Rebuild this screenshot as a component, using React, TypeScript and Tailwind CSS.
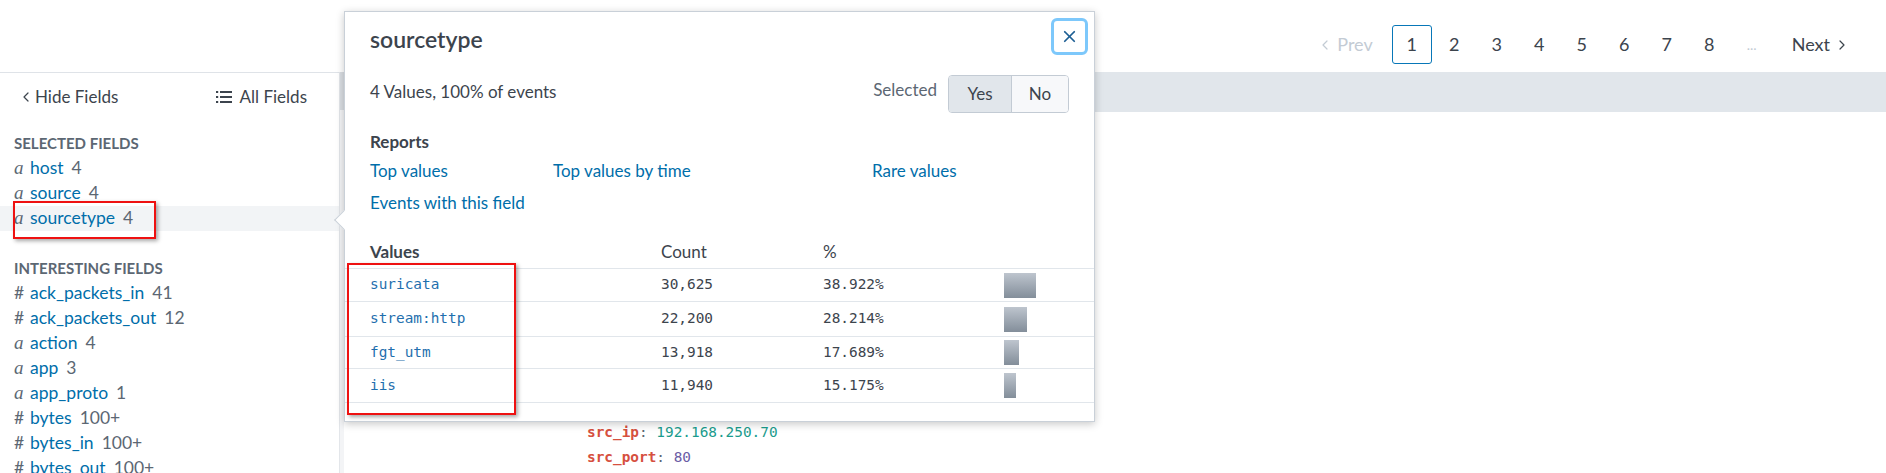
import React from 'react';
import { X, ChevronLeft, ChevronRight } from 'lucide-react';

type Field = { type: string; name: string; count: string; active?: boolean };

const SELECTED_FIELDS: Field[] = [
  { type: 'a', name: 'host', count: '4' },
  { type: 'a', name: 'source', count: '4' },
  { type: 'a', name: 'sourcetype', count: '4', active: true },
];

const INTERESTING_FIELDS: Field[] = [
  { type: '#', name: 'ack_packets_in', count: '41' },
  { type: '#', name: 'ack_packets_out', count: '12' },
  { type: 'a', name: 'action', count: '4' },
  { type: 'a', name: 'app', count: '3' },
  { type: 'a', name: 'app_proto', count: '1' },
  { type: '#', name: 'bytes', count: '100+' },
  { type: '#', name: 'bytes_in', count: '100+' },
  { type: '#', name: 'bytes_out', count: '100+' },
];

const VALUES = [
  { value: 'suricata', count: '30,625', pct: '38.922%', bar: 32, rowH: 'h-[33px]' },
  { value: 'stream:http', count: '22,200', pct: '28.214%', bar: 23, rowH: 'h-[35px]' },
  { value: 'fgt_utm', count: '13,918', pct: '17.689%', bar: 15, rowH: 'h-[32px]' },
  { value: 'iis', count: '11,940', pct: '15.175%', bar: 12, rowH: 'h-[34px]' },
];

const PAGES = ['1', '2', '3', '4', '5', '6', '7', '8', '...'];

const mono = "font-[family-name:'DejaVu_Sans_Mono',monospace]";

const FieldRow = ({ field }: { field: Field }) => (
  <div className={`flex items-center h-[25px] pl-[14px] text-[17.5px] ${field.active ? 'bg-[#f2f4f6]' : ''}`}>
    {field.type === 'a' ? (
      <span className="w-[16px] italic font-[family-name:'Liberation_Serif',serif] text-[19px] text-[#5c6773]">a</span>
    ) : (
      <span className="w-[16px] text-[#5c6773]">#</span>
    )}
    <span className="text-[#006eaa]">{field.name}</span>
    <span className="ml-[8px] text-[#5c6773]">{field.count}</span>
  </div>
);

const Pagination = () => (
  <div className="flex items-center text-[18px] text-[#3c444d]">
    <span className="flex items-center text-[#c3cbd4] mr-[19px]">
      <ChevronLeft size={16} strokeWidth={1.8} className="mr-[4px]" />
      Prev
    </span>
    <div className="flex items-center gap-[2.5px]">
      {PAGES.map((p, i) => (
        <span
          key={p}
          className={`w-[40px] h-[39px] flex items-center justify-center rounded-[3px] ${
            i === 0 ? 'border border-[#0877b8]' : ''
          } ${p === '...' ? 'text-[#c3cbd4] text-[14px]' : ''}`}
        >
          {p}
        </span>
      ))}
    </div>
    <span className="flex items-center ml-[20px]">
      Next
      <ChevronRight size={16} strokeWidth={1.8} className="ml-[4px]" />
    </span>
  </div>
);

const Popover = () => (
  <div className="absolute left-[344px] top-[11px] w-[751px] h-[411px] bg-white border border-[#c9d0d8] shadow-[0_2px_8px_rgba(0,0,0,0.22)] text-[#3c444d]">
    <div className="absolute left-[-8px] top-[201px] w-[14px] h-[14px] rotate-45 bg-white border-l border-b border-[#c9d0d8]" />
    <button className="absolute top-[6px] right-[6px] w-[37px] h-[37px] flex items-center justify-center rounded-[6px] border-[3px] border-[#7dc8fb] bg-white">
      <X size={19} strokeWidth={2.2} className="text-[#1d5f94]" />
    </button>

    <div className="px-[25px]">
      <div className="pt-[14px] text-[23px] leading-[26px] font-semibold">sourcetype</div>

      <div className="mt-[23px] h-[38px] flex items-center justify-between">
        <span className="mb-[4px]">4 Values, 100% of events</span>
        <div className="flex items-center">
          <span className="mb-[8px] mr-[11px] text-[#5c6773]">Selected</span>
          <div className="flex h-[38px] rounded-[4px] border border-[#c3cbd4] overflow-hidden">
            <span className="w-[63px] flex items-center justify-center bg-[#e1e6eb] border-r border-[#c3cbd4]">Yes</span>
            <span className="w-[56px] flex items-center justify-center bg-[#f7f8fa]">No</span>
          </div>
        </div>
      </div>

      <div className="mt-[19px] leading-[20px] font-bold">Reports</div>
      <div className="mt-[3px] flex leading-[32px] text-[#006eaa]">
        <span className="w-[183px]">Top values</span>
        <span className="w-[319px]">Top values by time</span>
        <span>Rare values</span>
      </div>
      <div className="leading-[32px] text-[#006eaa]">Events with this field</div>
    </div>

    <div className="mt-[17px]">
      <div className="h-[33px] flex items-center pl-[25px] border-b border-[#e1e6eb]">
        <span className="w-[291px] font-bold">Values</span>
        <span className="w-[162px]">Count</span>
        <span>%</span>
      </div>
      {VALUES.map((v) => (
        <div key={v.value} className={`${v.rowH} flex items-center pl-[25px] border-b border-[#e1e6eb] text-[14.4px] ${mono}`}>
          <span className="w-[291px] text-[#1f6fae]">{v.value}</span>
          <span className="w-[162px]">{v.count}</span>
          <span className="w-[181px]">{v.pct}</span>
          <span
            className="h-[25px] bg-gradient-to-b from-[#bec5ce] to-[#838e9a]"
            style={{ width: v.bar }}
          />
        </div>
      ))}
    </div>
  </div>
);

export default function App() {
  return (
    <div className="relative w-[1886px] h-[473px] overflow-hidden bg-white text-[17px] text-[#3c444d] font-[family-name:Lato,'Open_Sans',sans-serif]">
      <div className="h-[72px] flex justify-end items-start pt-[25px] pr-[36px]">
        <Pagination />
      </div>

      <div className="flex h-[401px]">
        <aside className="w-[339px] border-t border-[#dfe3e8]">
          <div className="h-[48px] flex items-center justify-between pl-[18px] pr-[32px]">
            <span className="flex items-center">
              <ChevronLeft size={16} strokeWidth={1.8} className="mr-[1px]" />
              Hide Fields
            </span>
            <span className="flex items-center">
              <svg width="16" height="14" viewBox="0 0 16 14" className="mr-[8px]" fill="#3c444d">
                <rect x="0" y="1" width="2.2" height="2" />
                <rect x="4" y="1" width="12" height="2" />
                <rect x="0" y="6" width="2.2" height="2" />
                <rect x="4" y="6" width="12" height="2" />
                <rect x="0" y="11" width="2.2" height="2" />
                <rect x="4" y="11" width="12" height="2" />
              </svg>
              All Fields
            </span>
          </div>
          <div className="pt-[10px]">
            <div className="h-[25px] flex items-center pl-[14px] text-[15px] font-bold uppercase text-[#5c6773]">Selected Fields</div>
            {SELECTED_FIELDS.map((f) => (
              <FieldRow key={f.name} field={f} />
            ))}
            <div className="mt-[25px] h-[25px] flex items-center pl-[14px] text-[15px] font-bold uppercase text-[#5c6773]">Interesting Fields</div>
            {INTERESTING_FIELDS.map((f) => (
              <FieldRow key={f.name} field={f} />
            ))}
          </div>
        </aside>

        <div className="w-[5px] bg-[#f3f4f6] border-l border-[#e3e6ea]">
          <div className="h-[38px] bg-[#d9dde2]" />
        </div>

        <main className="flex-1 flex flex-col">
          <div className="h-[40px] bg-[#e1e6eb]" />
          <div className={`pl-[243px] pt-[308px] text-[14.4px] leading-[25px] ${mono}`}>
            <div>
              <span className="text-[#d6503f] font-bold">src_ip</span>
              <span className="text-[#5c6773]">: </span>
              <span className="text-[#1a9c8d]">192.168.250.70</span>
            </div>
            <div>
              <span className="text-[#d6503f] font-bold">src_port</span>
              <span className="text-[#5c6773]">: </span>
              <span className="text-[#6b5ca5]">80</span>
            </div>
          </div>
        </main>
      </div>

      <Popover />

      <div className="absolute left-[13px] top-[201px] w-[143px] h-[38px] border-2 border-[#ee1111] shadow-[2px_2px_4px_rgba(0,0,0,0.35)]" />
      <div className="absolute left-[347px] top-[263px] w-[169px] h-[152px] border-2 border-[#ee1111] shadow-[2px_2px_4px_rgba(0,0,0,0.35)]" />
    </div>
  );
}
